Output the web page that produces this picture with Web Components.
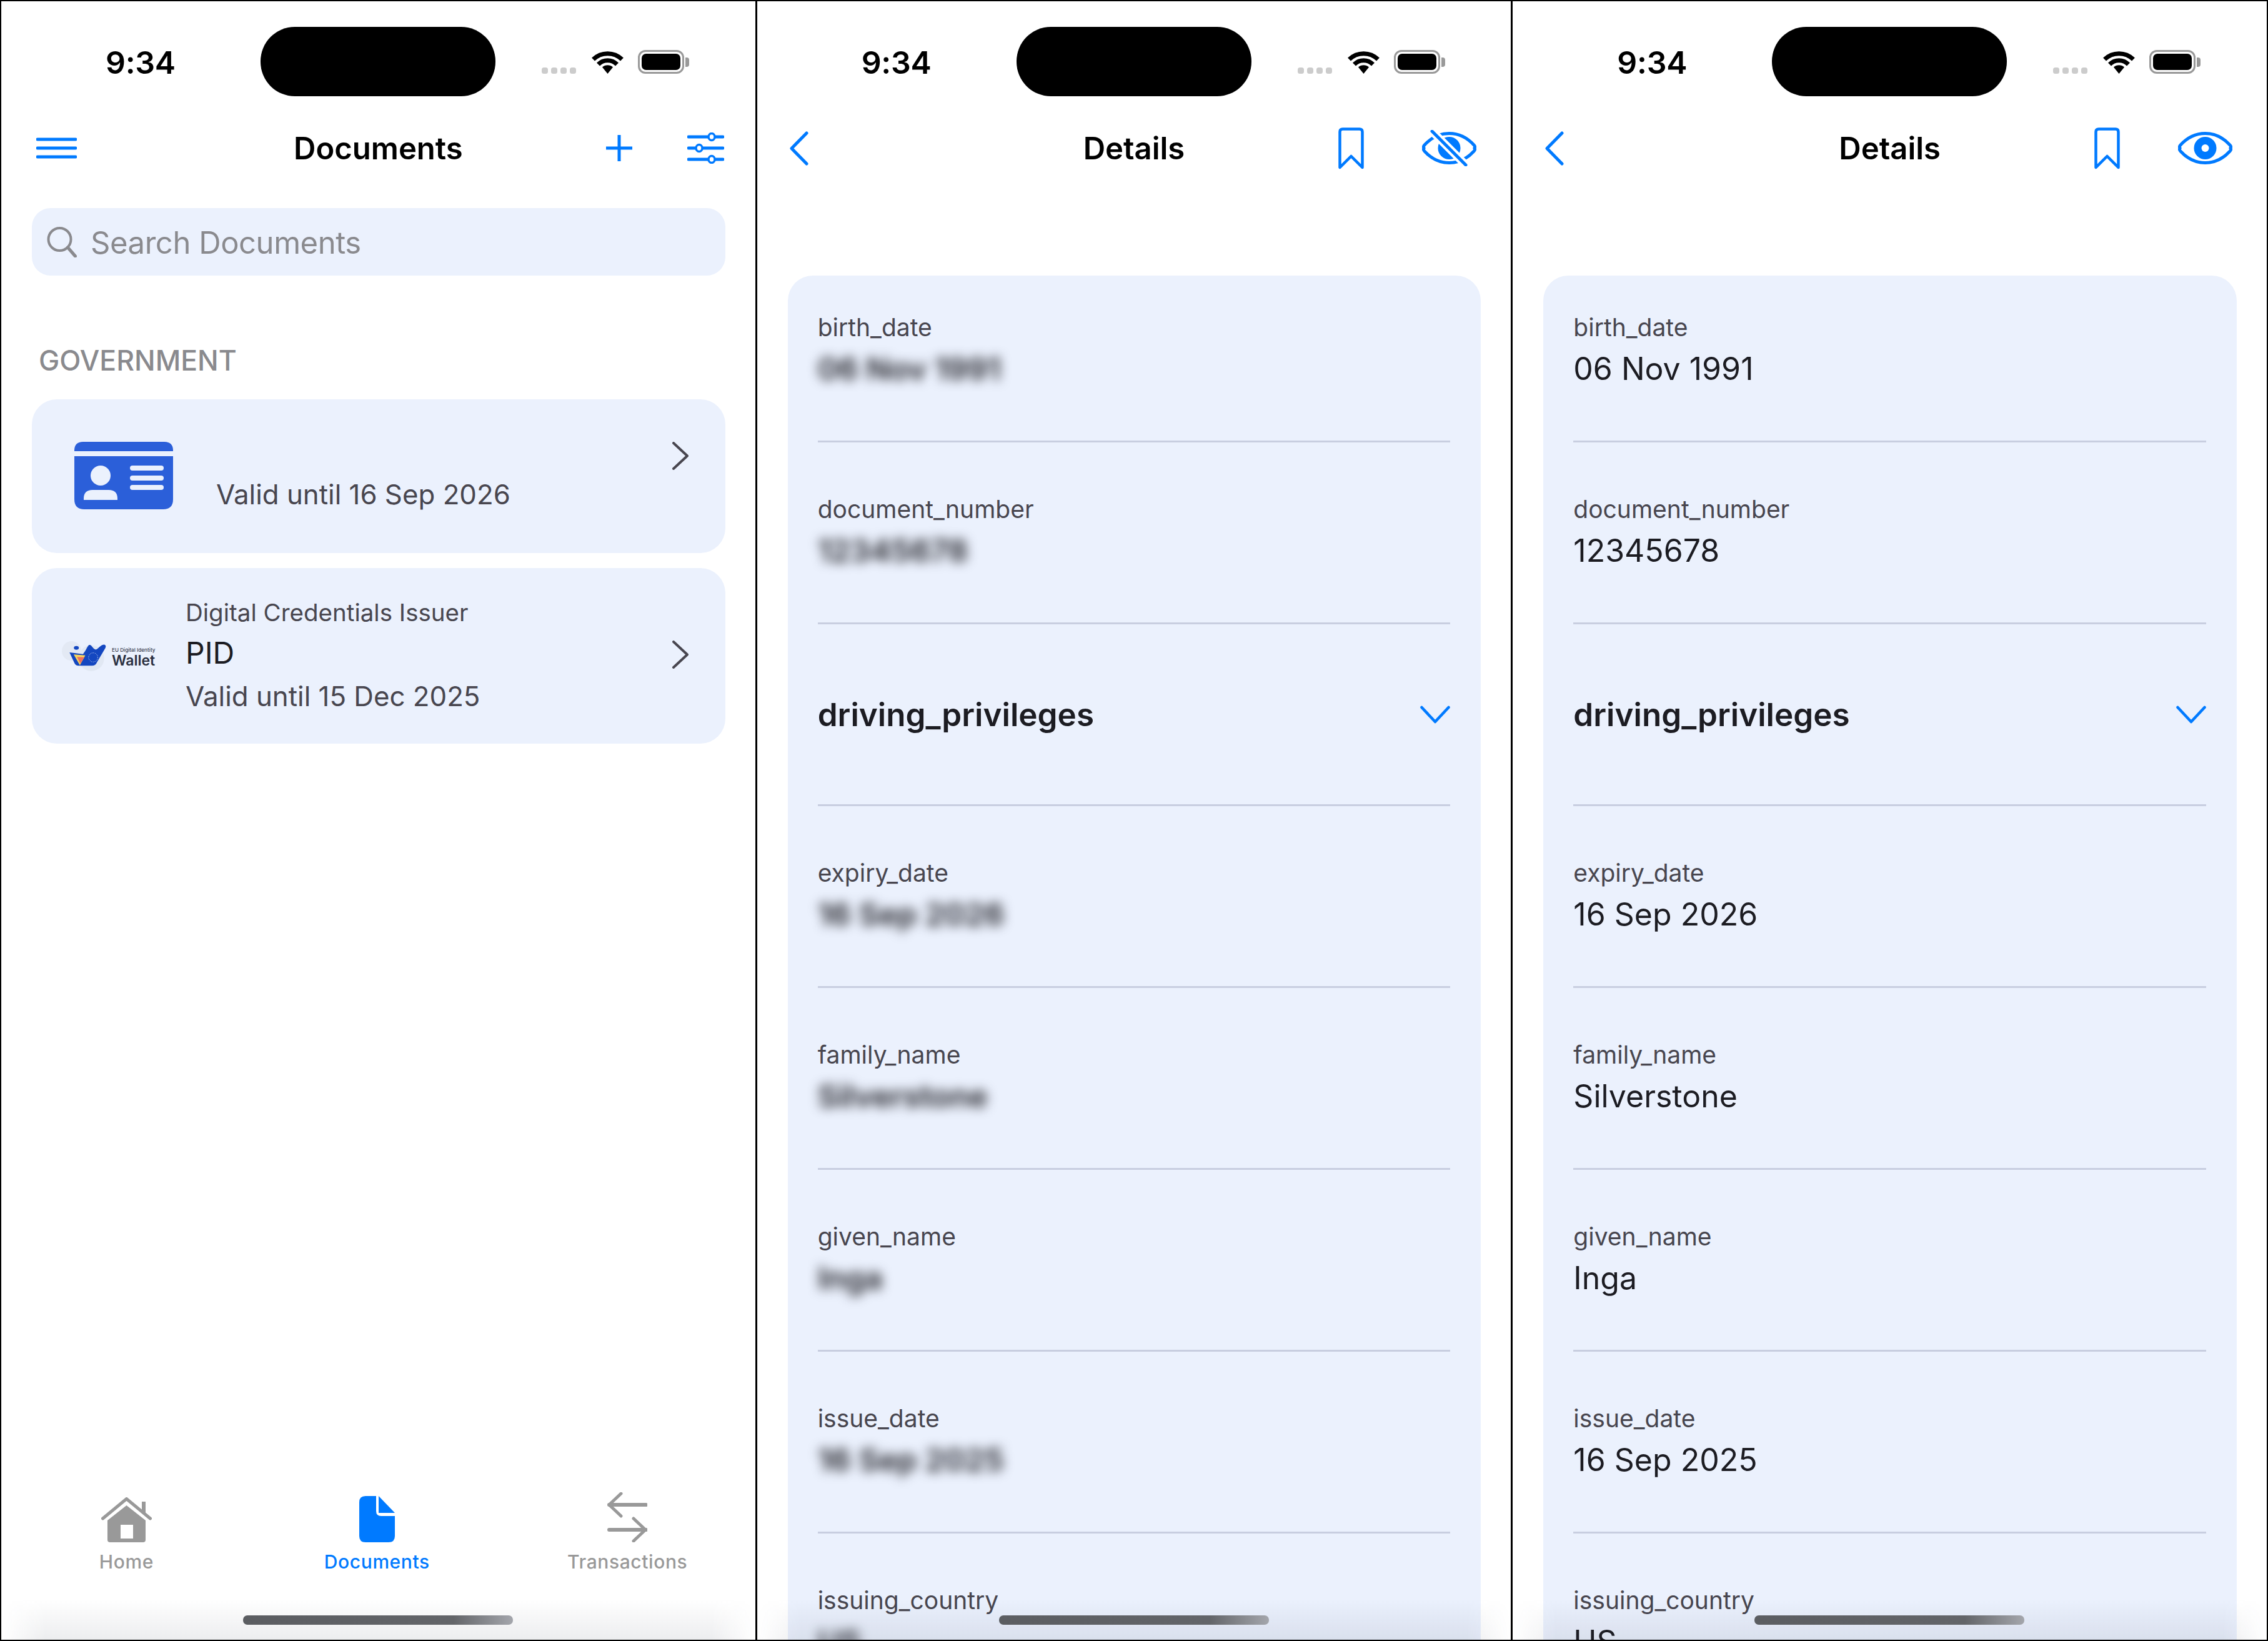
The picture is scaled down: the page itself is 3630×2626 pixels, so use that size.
<!DOCTYPE html>
<html lang="en">
<head>
<meta charset="utf-8">
<title>Wallet documents</title>
<style>
  html, body { margin: 0; background: #000; }
  body { font-family: Inter, "Noto Sans", sans-serif; }
  #screens {
    width: 3630px;
    height: 2626px;
    box-sizing: border-box;
    padding: 2px;
    display: grid;
    grid-template-columns: repeat(3, 1fr);
    gap: 3px;
    overflow: hidden;
  }
  .logo-text { display: flex; flex-direction: column; color: #2a2f3f; flex: none; padding-top: 4px; }
  .logo-text small { font-size: 8.2px; line-height: 12px; font-weight: 500; white-space: nowrap; color: #3a3f50; }
  .logo-text b { font-size: 23px; line-height: 23px; font-weight: 600; }
</style>
</head>
<body>
<div id="screens">
  <phone-screen>
    <nav-bar title="Documents">
      <svg slot="start" style="margin-left:4px" width="65" height="34" viewBox="0 0 65 34" fill="none" stroke="#007aff" stroke-width="5" stroke-linecap="round"><path d="M2 3H63M2 17H63M2 31H63"/></svg>
      <svg slot="end" width="42" height="42" viewBox="0 0 42 42" fill="none" stroke="#007aff" stroke-width="5"><path d="M21 0V42M0 21H42"/></svg>
      <svg slot="end" width="59" height="50" viewBox="0 0 59 50" fill="#fff" stroke="#007aff" stroke-width="5" stroke-linecap="round"><path d="M2 7H57M2 25H57M2 43H57"/><g stroke-width="3.5"><ellipse cx="39" cy="7" rx="5" ry="5.5"/><ellipse cx="19" cy="25" rx="5" ry="5.5"/><ellipse cx="39" cy="43" rx="5" ry="5.5"/></g></svg>
    </nav-bar>
    <search-field placeholder="Search Documents"></search-field>
    <section-title>GOVERNMENT</section-title>
    <doc-card variant="plain">
      <svg slot="logo" width="158" height="108" viewBox="0 0 158 108"><path fill="#2b5fd9" d="M0 15V14Q0 0 14 0H144Q158 0 158 14V15ZM0 23H158V92Q158 108 142 108H16Q0 108 0 92Z"/><g fill="#ebf1fd"><circle cx="42" cy="54" r="16"/><path d="M15 93V91Q15 77 29 77H55Q69 77 69 91V93Z"/><rect x="89" y="38" width="54" height="8" rx="4"/><rect x="89" y="54" width="54" height="8" rx="4"/><rect x="89" y="69" width="54" height="8" rx="4"/></g></svg>
      <doc-line kind="valid">Valid until 16 Sep 2026</doc-line>
    </doc-card>
    <doc-card>
      <div slot="logo" style="display:flex;align-items:center;gap:8px;width:150px">
        <svg style="flex:none" width="73" height="50" viewBox="110 255 220 150"><circle cx="160" cy="305" r="47" fill="#e3e9f4"/><circle cx="255" cy="340" r="62" fill="#e1e8f3"/><ellipse cx="183" cy="290" rx="12" ry="9" fill="#1447c0"/><path fill="#1447c0" d="M150 312L215 320C232 300 236 280 245 276C258 274 262 296 276 298C290 296 296 276 316 274C326 276 327 284 322 292L282 360Q276 376 258 376H192Q180 376 174 364Z"/><path fill="#f8d65e" d="M170 322L226 326L200 374Z"/><path fill="#f0705c" d="M186 334L222 335L202 366Z"/><circle cx="264" cy="336" r="22" fill="none" stroke="#e8eefb" stroke-width="3" stroke-dasharray="3 5"/></svg>
        <div class="logo-text"><small>EU Digital Identity</small><b>Wallet</b></div>
      </div>
      <doc-line kind="issuer">Digital Credentials Issuer</doc-line>
      <doc-line kind="name">PID</doc-line>
      <doc-line kind="valid">Valid until 15 Dec 2025</doc-line>
    </doc-card>
    <tab-bar>
      <tab-item label="Home">
        <svg width="81" height="72" viewBox="0 0 81 72" fill="#999"><path d="M2.5 34L40.5 2.5L78.5 34" fill="none" stroke="#999" stroke-width="5" stroke-linecap="round"/><rect x="65" y="7" width="6" height="18"/><path d="M40.5 13L10 37V68Q10 72 14 72H67Q71 72 71 68V37Z"/><rect x="31" y="44" width="20" height="22" fill="#fff"/></svg>
      </tab-item>
      <tab-item label="Documents" active>
        <svg width="57" height="74" viewBox="0 0 57 74" fill="#007aff"><path d="M10 0H27V24Q27 32 35 32H57V64Q57 74 47 74H10Q0 74 0 64V10Q0 0 10 0Z"/><path d="M31 0L57 27H31Z"/></svg>
      </tab-item>
      <tab-item label="Transactions">
        <svg width="64" height="80" viewBox="0 0 64 80" fill="none" stroke="#999" stroke-linecap="round" stroke-linejoin="round"><path stroke-width="6" d="M3 20H62M62 60H3"/><path stroke-width="5" d="M22 2L3 20L22 38M42 42L61 60L42 78"/></svg>
      </tab-item>
    </tab-bar>
  </phone-screen>

  <phone-screen>
    <nav-bar title="Details">
      <icon-back slot="start"></icon-back>
      <icon-bookmark slot="end"></icon-bookmark>
      <icon-eye slot="end" off></icon-eye>
    </nav-bar>
    <detail-list>
      <detail-row label="birth_date" masked>06 Nov 1991</detail-row>
      <detail-row label="document_number" masked>12345678</detail-row>
      <detail-group>driving_privileges</detail-group>
      <detail-row label="expiry_date" masked>16 Sep 2026</detail-row>
      <detail-row label="family_name" masked>Silverstone</detail-row>
      <detail-row label="given_name" masked>Inga</detail-row>
      <detail-row label="issue_date" masked>16 Sep 2025</detail-row>
      <detail-row label="issuing_country" masked>US</detail-row>
    </detail-list>
  </phone-screen>

  <phone-screen>
    <nav-bar title="Details">
      <icon-back slot="start"></icon-back>
      <icon-bookmark slot="end"></icon-bookmark>
      <icon-eye slot="end"></icon-eye>
    </nav-bar>
    <detail-list>
      <detail-row label="birth_date">06 Nov 1991</detail-row>
      <detail-row label="document_number">12345678</detail-row>
      <detail-group>driving_privileges</detail-group>
      <detail-row label="expiry_date">16 Sep 2026</detail-row>
      <detail-row label="family_name">Silverstone</detail-row>
      <detail-row label="given_name">Inga</detail-row>
      <detail-row label="issue_date">16 Sep 2025</detail-row>
      <detail-row label="issuing_country">US</detail-row>
    </detail-list>
  </phone-screen>
</div>

<script>
// small helper so every element below is just markup + styles in an open shadow root
const define = (name, html) => {
  customElements.define(name, class extends HTMLElement {
    constructor() {
      super();
      this.attachShadow({ mode: 'open' });
    }
    connectedCallback() {
      this.shadowRoot.innerHTML = typeof html === 'function' ? html(this) : html;
    }
  });
};

define('phone-screen', `
  <style>
    :host {
      position: relative;
      display: flex;
      flex-direction: column;
      height: 2622px;
      overflow: hidden;
      background: #fff;
    }
    .fade {
      position: absolute;
      left: 0; right: 0; bottom: 0;
      height: 66px;
      background: linear-gradient(rgba(40,50,70,0), rgba(40,50,70,.085));
      -webkit-mask-image: linear-gradient(90deg, transparent, #000 70px, #000 calc(100% - 70px), transparent);
      mask-image: linear-gradient(90deg, transparent, #000 70px, #000 calc(100% - 70px), transparent);
    }
    .indicator {
      position: absolute;
      left: 387px;
      bottom: 24px;
      width: 432px;
      height: 15px;
      border-radius: 7px;
      background: linear-gradient(90deg, #5b5d61 0, #636569 78%, #a4a6ac 100%);
    }
  </style>
  <status-bar></status-bar>
  <slot></slot>
  <div class="fade"></div>
  <div class="indicator"></div>
`);

define('status-bar', `
  <style>
    :host {
      display: flex;
      box-sizing: border-box;
      height: 152px;
      padding: 41px 0 0 167px;
      flex: none;
    }
    .time {
      width: 248px;
      font-size: 50px;
      line-height: 50px;
      font-weight: 600;
      color: #000;
      padding-top: 32px;
      letter-spacing: -.3px;
    }
    .island { width: 376px; height: 111px; border-radius: 55px; background: #000; }
    .right { display: flex; align-items: flex-end; height: 75px; margin-left: 74px; }
    .dots { display: flex; gap: 5px; margin-right: 25px; }
    .dots i { width: 10px; height: 10px; border-radius: 3.5px; background: #ccc; }
    .batt {
      box-sizing: border-box;
      width: 74px; height: 38px;
      margin-left: 23px;
      padding: 3px;
      border: 3.5px solid #999;
      border-radius: 12px;
    }
    .batt b { display: block; height: 100%; border-radius: 7px; background: #000; }
    .nub { width: 6px; height: 15px; margin: 0 0 11px 2px; border-radius: 0 4px 4px 0; background: #999; }
  </style>
  <div class="time">9:34</div>
  <div class="island"></div>
  <div class="right">
    <div class="dots"><i></i><i></i><i></i><i></i></div>
    <svg width="51" height="38" viewBox="0 0 51 38" fill="none" stroke="#000" stroke-width="7"><path d="M2.5 15A33 33 0 0 1 48.5 15M10.5 23A21 21 0 0 1 40.5 23"/><path fill="#000" stroke="none" d="M25.5 38L17 27.5A13 13 0 0 1 34 27.5Z"/></svg>
    <div class="batt"><b></b></div>
    <div class="nub"></div>
  </div>
`);

define('nav-bar', el => {
  const docs = el.getAttribute('title') === 'Documents';
  return `
  <style>
    :host {
      display: grid;
      grid-template-columns: 1fr auto 1fr;
      align-items: center;
      height: 166px;
      flex: none;
    }
    .start { padding-left: 52px; display: flex; align-items: center; }
    .title { font-size: 49px; font-weight: 600; color: #000; }
    .end { display: flex; align-items: center; justify-content: flex-end; gap: ${docs ? 88 : 93}px; padding-right: ${docs ? 50 : 55}px; }
    ::slotted(svg) { display: block; }
  </style>
  <div class="start"><slot name="start"></slot></div>
  <div class="title">${el.getAttribute('title')}</div>
  <div class="end"><slot name="end"></slot></div>
`;
});

define('icon-back', `
  <style>:host { display: block; } svg { display: block; }</style>
  <svg width="30" height="55" viewBox="0 0 30 55" fill="none" stroke="#007aff" stroke-width="5" stroke-linecap="round" stroke-linejoin="round"><path d="M27 3L3 27.5L27 52"/></svg>
`);

define('icon-bookmark', `
  <style>:host { display: block; } svg { display: block; }</style>
  <svg width="41" height="67" viewBox="0 0 41 67" fill="none" stroke="#007aff" stroke-width="4.5" stroke-linecap="round" stroke-linejoin="round"><path d="M2.5 7Q2.5 2.5 7 2.5H34Q38.5 2.5 38.5 7V64L20.5 46L2.5 64Z"/></svg>
`);

define('icon-eye', el => `
  <style>:host { display: block; } svg { display: block; }</style>
  <svg width="87" height="58" viewBox="0 0 87 58" fill="none" stroke="#007aff" stroke-width="5" stroke-linecap="round">
    <path d="M3 29Q1.5 26.5 4 24C15 12 29 5.5 43.5 5.5C58 5.5 72 12 83 24Q85.5 26.5 84 29Q85.5 31.5 83 34C72 46 58 52.5 43.5 52.5C29 52.5 15 46 4 34Q1.5 31.5 3 29Z"/>
    <circle cx="43.5" cy="29" r="18" fill="#007aff" stroke="none"/>
    ${el.hasAttribute('off')
      ? '<path d="M16 2L70 56" stroke="#fff" stroke-width="13"/><path d="M16 2L70 56"/>'
      : '<circle cx="43.5" cy="29" r="6" fill="#fff" stroke="none"/>'}
  </svg>
`);

define('search-field', el => `
  <style>
    :host {
      display: flex;
      align-items: center;
      gap: 22px;
      box-sizing: border-box;
      height: 108px;
      margin: 13px 48px 0 49px;
      padding-left: 23px;
      border-radius: 30px;
      background: #ebf1fd;
      color: #8a8a8e;
      font-size: 49px;
      letter-spacing: -.45px;
      flex: none;
    }
    span { position: relative; top: 1px; }
  </style>
  <svg width="49" height="49" viewBox="0 0 49 49" fill="none" stroke="#8a8a8e" stroke-width="4" stroke-linecap="round"><circle cx="21.5" cy="20" r="18"/><path d="M34.5 33L46.5 47" stroke-width="5"/></svg>
  <span>${el.getAttribute('placeholder')}</span>
`);

define('section-title', `
  <style>
    :host {
      display: block;
      flex: none;
      margin: 109px 0 34px 60px;
      font-size: 44.5px;
      line-height: 55px;
      font-weight: 500;
      color: #8a8a8e;
    }
  </style>
  <slot></slot>
`);

define('doc-card', el => {
  const plain = el.getAttribute('variant') === 'plain';
  return `
  <style>
    :host {
      display: flex;
      align-items: ${plain ? 'flex-start' : 'center'};
      box-sizing: border-box;
      flex: none;
      height: ${plain ? 246 : 281}px;
      margin: ${plain ? 0 : 24}px 48px 0 49px;
      padding: ${plain ? '68px 59px 0 68px' : '0 59px 0 47px'};
      border-radius: 40px;
      background: #ebf1fd;
    }
    .logo { flex: none; width: ${plain ? 158 : 150}px; margin-right: ${plain ? 69 : 49}px; }
    .text { flex: 1; display: flex; flex-direction: column; margin-top: ${plain ? 52 : 0}px; }
    .chev { flex: none; display: block; margin-top: ${plain ? 0 : -4}px; }
  </style>
  <div class="logo"><slot name="logo"></slot></div>
  <div class="text"><slot></slot></div>
  <svg class="chev" width="27" height="45" viewBox="0 0 27 45" fill="none" stroke="#48464f" stroke-width="4" stroke-linecap="round" stroke-linejoin="round"><path d="M3 2L25 22.5L3 43"/></svg>
`;
});

define('doc-line', el => {
  const kinds = {
    issuer: 'font-size:38.5px;line-height:56px;color:#48464f;',
    name: 'font-size:48px;line-height:74px;color:#1c1c22;',
    valid: 'font-size:43.8px;line-height:65px;color:#48464f;'
  };
  return `<style>:host { display: block; ${kinds[el.getAttribute('kind')]} }</style><slot></slot>`;
});

define('tab-bar', `
  <style>
    :host {
      display: grid;
      grid-template-columns: repeat(3, 1fr);
      margin-top: auto;
      margin-bottom: 108px;
      padding-right: 4px;
    }
  </style>
  <slot></slot>
`);

define('tab-item', el => `
  <style>
    :host {
      display: flex;
      flex-direction: column;
      align-items: center;
      justify-content: flex-end;
      gap: 14px;
      font-size: 30px;
      letter-spacing: .6px;
      line-height: 34px;
      font-weight: 500;
      color: ${el.hasAttribute('active') ? '#007aff' : '#999'};
    }
    ::slotted(svg) { display: block; }
  </style>
  <slot></slot>
  <span>${el.getAttribute('label')}</span>
`);

define('detail-list', `
  <style>
    :host {
      display: block;
      flex: none;
      margin: 121px 48px 0 49px;
      padding: 0 49px 0 48px;
      border-radius: 40px;
      background: #ebf1fd;
    }
  </style>
  <slot></slot>
`);

define('detail-row', el => `
  <style>
    :host {
      display: block;
      box-sizing: border-box;
      height: 291px;
      padding-top: 82px;
      border-bottom: 3px solid #c8cee0;
    }
    :host(:first-child) { height: 267px; padding-top: 58px; }
    .label { font-size: 39px; line-height: 50px; color: #48464f; }
    .value { font-size: 50px; line-height: 70px; margin-top: 6px; color: #1c1c22; }
    :host([masked]) .value { filter: blur(9px); font-weight: 600; }
  </style>
  <div class="label">${el.getAttribute('label')}</div>
  <div class="value"><slot></slot></div>
`);

define('detail-group', `
  <style>
    :host {
      display: flex;
      align-items: center;
      justify-content: space-between;
      box-sizing: border-box;
      height: 291px;
      border-bottom: 3px solid #c8cee0;
      font-size: 51.2px;
      font-weight: 600;
      color: #1c1c22;
    }
    svg { display: block; }
  </style>
  <span><slot></slot></span>
  <svg width="48" height="29" viewBox="0 0 48 29" fill="none" stroke="#007aff" stroke-width="4.5" stroke-linecap="round" stroke-linejoin="round"><path d="M2.5 3L24 26L45.5 3"/></svg>
`);
</script>
</body>
</html>
